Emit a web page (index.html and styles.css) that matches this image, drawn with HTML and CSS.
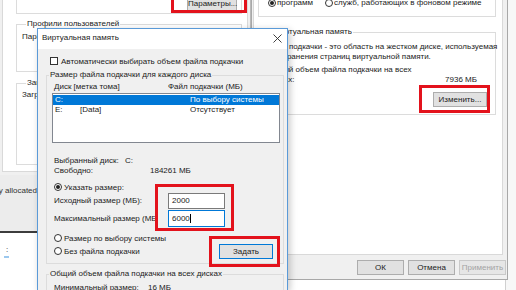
FILE: index.html
```html
<!DOCTYPE html>
<html lang="ru">
<head>
    <meta charset="UTF-8">
    <meta name="viewport" content="width=device-width, initial-scale=1.0">
    <title>Виртуальная память</title>
    <link rel="stylesheet" href="styles.css">
</head>
<body>
<div class="desk">

    <!-- window far right, behind everything -->
    <div class="win win-far"></div>

    <!-- window behind the left one -->
    <div class="win win-back">
        <span>Fully allocated</span>
    </div>
    <div class="win win-explorer">
        <span class="colon">:</span>
        <span class="tick"></span>
    </div>

    <!-- System properties -->
    <div class="win win-sys">
        <div class="tab-panel sys-panel">
            <div class="grp grp-perf">
                <button class="btn btn-params">Параметры...</button>
            </div>
            <fieldset class="grp grp-profiles">
                <legend>Профили пользователей</legend>
                <p>Параметры рабочего стола, связанные со входом в систему</p>
            </fieldset>
            <fieldset class="grp grp-boot">
                <legend>Загрузка и восстановление</legend>
                <p>Загрузка и восстановление системы, отладочная информация</p>
            </fieldset>
        </div>
    </div>

    <!-- Performance options -->
    <div class="win win-perf">
        <div class="tab-panel perf-panel">
            <div class="grp grp-cpu">
                <div class="opt opt-programs"><span class="radio on"></span>программ</div>
                <div class="opt"><span class="radio"></span>служб, работающих в фоновом режиме</div>
            </div>
            <fieldset class="grp grp-vm">
                <legend>Виртуальная память</legend>
                <p class="vm-text">Файл подкачки - это область на жестком диске, используемая<br>для хранения страниц виртуальной памяти.</p>
                <p class="vm-total">Общий объем файла подкачки на всех</p>
                <div class="vm-total-row"><span>дисках:</span><span>7936 МБ</span></div>
                <div class="btn-line"><button class="btn btn-change">Изменить...</button></div>
            </fieldset>
        </div>
        <div class="dlg-buttons">
            <button class="btn">ОК</button>
            <button class="btn">Отмена</button>
            <button class="btn disabled">Применить</button>
        </div>
    </div>

    <!-- Virtual memory dialog -->
    <div class="win vm">
        <div class="vm-title">
            <span>Виртуальная память</span>
            <svg class="close" width="9" height="9" viewBox="0 0 9 9">
                <path d="M0.5 0.5L8.5 8.5M8.5 0.5L0.5 8.5" stroke="#2b2b2b" stroke-width="0.9" fill="none"/>
            </svg>
        </div>
        <div class="vm-body">
            <div class="check-row"><span class="checkbox"></span>Автоматически выбирать объем файла подкачки</div>

            <fieldset class="vm-grp vm-grp-disk">
                <legend>Размер файла подкачки для каждого диска</legend>
                <div class="cols-head"><span class="col-a">Диск [метка тома]</span><span>Файл подкачки (МБ)</span></div>
                <div class="disk-list">
                    <div class="disk-row selected"><span class="c-drive">C:</span><span class="c-label"></span><span>По выбору системы</span></div>
                    <div class="disk-row"><span class="c-drive">E:</span><span class="c-label">[Data]</span><span>Отсутствует</span></div>
                </div>
                <div class="info-row first"><span class="info-drive">Выбранный диск:</span><span>C:</span></div>
                <div class="info-row"><span class="info-free">Свободно:</span><span>184261 МБ</span></div>

                <div class="radio-row r-custom"><span class="radio on"></span>Указать размер:</div>
                <div class="size-row"><span class="size-label">Исходный размер (МБ):</span><span class="field">2000</span></div>
                <div class="size-row second"><span class="size-label">Максимальный размер (МБ):</span><span class="field focus">6000<span class="caret"></span></span></div>
                <div class="radio-row r-system"><span class="radio"></span>Размер по выбору системы</div>
                <div class="radio-row r-none">
                    <span class="radio-label"><span class="radio"></span>Без файла подкачки</span>
                    <button class="btn btn-set">Задать</button>
                </div>
            </fieldset>

            <fieldset class="vm-grp vm-grp-total">
                <legend>Общий объем файла подкачки на всех дисках</legend>
                <div class="info-row min-row"><span class="info-min">Минимальный размер:</span><span>16 МБ</span></div>
            </fieldset>
        </div>
    </div>

    <!-- red annotation frames -->
    <span class="mark mark-params"></span>
    <span class="mark mark-change"></span>
    <span class="mark mark-sizes"></span>
    <span class="mark mark-set"></span>
</div>
</body>
</html>
```

FILE: styles.css
```css
* {
    box-sizing: border-box;
}

body {
    margin: 0;
    width: 516px;
    height: 290px;
    overflow: hidden;
    background: #fff;
    font-family: "Liberation Sans", Arial, sans-serif;
    font-size: 8px;
    color: #1b1b1b;
}

p {
    margin: 0;
}

.desk {
    position: relative;
    width: 516px;
    height: 290px;
    overflow: hidden;
}

/* windows on the desktop */
.win {
    position: absolute;
    background: #f0f0f0;
    overflow: hidden;
}

.win-far {
    left: 505px;
    top: 0;
    width: 11px;
    height: 290px;
    background: #f7f7f7;
    border-left: 1px solid #d0d0d0;
}

.win-back {
    left: 0;
    top: 150px;
    width: 38px;
    height: 83px;
    background: #ececec;
    border-bottom: 2px solid #3c3c3c;
    display: flex;
    justify-content: flex-end;
    padding: 36px 1px 0 0;
    line-height: 10px;
    color: #333;
    white-space: nowrap;
}

.win-explorer {
    left: 0;
    top: 233px;
    width: 37px;
    height: 57px;
    background: #fff;
    padding: 12px 0 0 6px;
}

.win-explorer .colon {
    display: block;
    line-height: 10px;
}

.win-explorer .tick {
    display: block;
    width: 5px;
    height: 2px;
    margin: 1px 0 0 -2px;
    background: #9cc8ee;
}

.tab-panel {
    background: #fff;
    border: 1px solid #d9d9d9;
}

.grp {
    margin: 0;
    padding: 0;
    border: 1px solid #dcdcdc;
    min-width: 0;
}

.grp legend,
.vm-grp legend {
    padding: 0 1px;
    line-height: 10px;
}

/* system properties (left) */
.win-sys {
    left: 0;
    top: 0;
    width: 251px;
    height: 175px;
    border-right: 1px solid #b9b9b9;
}

.sys-panel {
    margin: -30px 0 0 2px;
    width: 246px;
    height: 202px;
}

.grp-perf {
    margin-left: 13px;
    width: 226px;
    height: 43px;
    display: flex;
    justify-content: flex-end;
    align-items: flex-end;
    padding: 0 4px 2px 0;
}

.btn-params {
    width: 50px;
}

.grp-profiles {
    margin: 5px 0 0 13px;
    width: 226px;
    height: 53px;
    padding-left: 5px;
}

.grp-profiles legend,
.grp-boot legend {
    margin-left: 4px;
}

.grp-profiles p {
    margin-top: 3px;
    line-height: 10px;
    white-space: nowrap;
}

.grp-boot {
    margin: 6px 0 0 13px;
    width: 226px;
    height: 87px;
    padding-left: 5px;
}

.grp-boot p {
    margin-top: 2px;
    line-height: 10px;
    white-space: nowrap;
}

/* performance options (right) */
.win-perf {
    left: 251px;
    top: 0;
    width: 257px;
    height: 280px;
    border: 1px solid #a8a8a8;
    border-top: none;
}

.perf-panel {
    margin: -40px 0 0 1px;
    width: 250px;
    height: 295px;
}

.grp-cpu {
    margin: 8px 0 0 4px;
    width: 238px;
    height: 48px;
    display: flex;
    align-items: flex-end;
    padding: 0 0 8px 9px;
    line-height: 10px;
}

.opt {
    display: flex;
    align-items: center;
    gap: 1px;
    white-space: nowrap;
}

.opt-programs {
    width: 57px;
}

.grp-vm {
    margin: 10px 0 0 4px;
    width: 238px;
    height: 88px;
    padding: 0 8px 0 8px;
    line-height: 10px;
}

.grp-vm legend {
    margin-left: 7px;
}

.vm-text {
    margin-top: 5px;
    white-space: nowrap;
}

.vm-total {
    margin-top: 3px;
}

.vm-total-row {
    display: flex;
    justify-content: space-between;
    padding-right: 10px;
}

.btn-line {
    display: flex;
    justify-content: flex-end;
    margin-top: 7px;
}

.btn-change {
    width: 54px;
}

.dlg-buttons {
    display: flex;
    justify-content: flex-end;
    gap: 4px;
    margin-top: 5px;
    padding-right: 1px;
}

.dlg-buttons .btn {
    width: 47px;
}

.btn {
    font: inherit;
    height: 15px;
    padding: 0;
    background: #e1e1e1;
    border: 1px solid #adadad;
    color: #1b1b1b;
    line-height: 13px;
    text-align: center;
    white-space: nowrap;
}

.btn.disabled {
    color: #a3a3a3;
    background: #e6e6e6;
    border-color: #c9c9c9;
}

/* virtual memory dialog */
.vm {
    left: 37px;
    top: 28px;
    width: 251px;
    height: 262px;
    border: 1px solid #5a9ad8;
    border-bottom: none;
    box-shadow: 2px 2px 7px rgba(0, 0, 0, 0.22);
}

.vm-title {
    height: 20px;
    background: #fff;
    display: flex;
    justify-content: space-between;
    align-items: center;
    padding: 0 5px 4px 4px;
}

.close {
    margin-top: 3px;
}

.vm-body {
    padding: 7px 0 0 8px;
}

.check-row {
    display: flex;
    align-items: center;
    gap: 3px;
    height: 10px;
    margin-left: 4px;
}

.checkbox {
    width: 8px;
    height: 8px;
    border: 1px solid #333;
    background: #fff;
}

.vm-grp {
    margin: 0;
    padding: 0;
    width: 238px;
    border: 1px solid #dcdcdc;
    min-width: 0;
}

.vm-grp legend {
    margin-left: 2px;
}

.vm-grp-disk {
    margin-top: 4px;
    padding-bottom: 7px;
}

.cols-head {
    display: flex;
    margin-top: 2px;
    height: 10px;
    line-height: 10px;
    padding-left: 7px;
}

.col-a {
    width: 114px;
}

.disk-list {
    margin: 1px 0 0 5px;
    width: 228px;
    height: 50px;
    border: 1px solid #828790;
    background: #fff;
    padding-top: 1px;
}

.disk-row {
    display: flex;
    height: 10px;
    line-height: 10px;
    padding-left: 2px;
}

.disk-row.selected {
    background: #0078d7;
    color: #fff;
}

.c-drive {
    width: 25px;
}

.c-label {
    width: 110px;
}

.info-row {
    display: flex;
    height: 10px;
    line-height: 10px;
    padding-left: 7px;
}

.info-row.first {
    margin-top: 13px;
}

.info-drive {
    width: 71px;
}

.info-free {
    width: 96px;
}

.info-min {
    width: 94px;
}

.radio-row {
    display: flex;
    align-items: center;
    height: 10px;
    padding-left: 7px;
}

.radio-row .radio,
.radio-label .radio {
    margin-right: 2px;
}

.radio-label {
    display: flex;
    align-items: center;
}

.r-custom {
    margin-top: 6px;
}

.r-system {
    margin-top: 6px;
}

.r-none {
    margin-top: 3px;
    justify-content: space-between;
    padding-right: 10px;
}

.btn-set {
    width: 54px;
    border-color: #0078d7;
    flex: none;
}

.radio {
    position: relative;
    display: inline-block;
    flex: none;
    width: 8px;
    height: 8px;
    border: 1px solid #333;
    border-radius: 50%;
    background: #fff;
}

.radio.on::after {
    content: "";
    position: absolute;
    left: 1px;
    top: 1px;
    width: 4px;
    height: 4px;
    border-radius: 50%;
    background: #222;
}

.size-row {
    display: flex;
    align-items: center;
    height: 17px;
}

.size-row.second {
    margin-top: 1px;
}

.size-label {
    width: 111px;
    padding-left: 7px;
    overflow: hidden;
    white-space: nowrap;
}

.field {
    display: flex;
    align-items: center;
    margin-left: 10px;
    width: 57px;
    height: 16px;
    padding-left: 3px;
    background: #fff;
    border: 1px solid #7a7a7a;
}

.field.focus {
    height: 17px;
    border-color: #0078d7;
}

.caret {
    width: 1px;
    height: 9px;
    background: #000;
}

.vm-grp-total {
    margin-top: 5px;
    height: 40px;
}

.min-row {
    margin-top: 4px;
}

/* red annotation frames */
.mark {
    position: absolute;
    border: 3px solid #e3121c;
}

.mark-params {
    left: 171px;
    top: -4px;
    width: 76px;
    height: 17px;
}

.mark-change {
    left: 419px;
    top: 85px;
    width: 71px;
    height: 28px;
}

.mark-sizes {
    left: 155px;
    top: 184px;
    width: 79px;
    height: 47px;
}

.mark-set {
    left: 209px;
    top: 236px;
    width: 71px;
    height: 31px;
}
```
